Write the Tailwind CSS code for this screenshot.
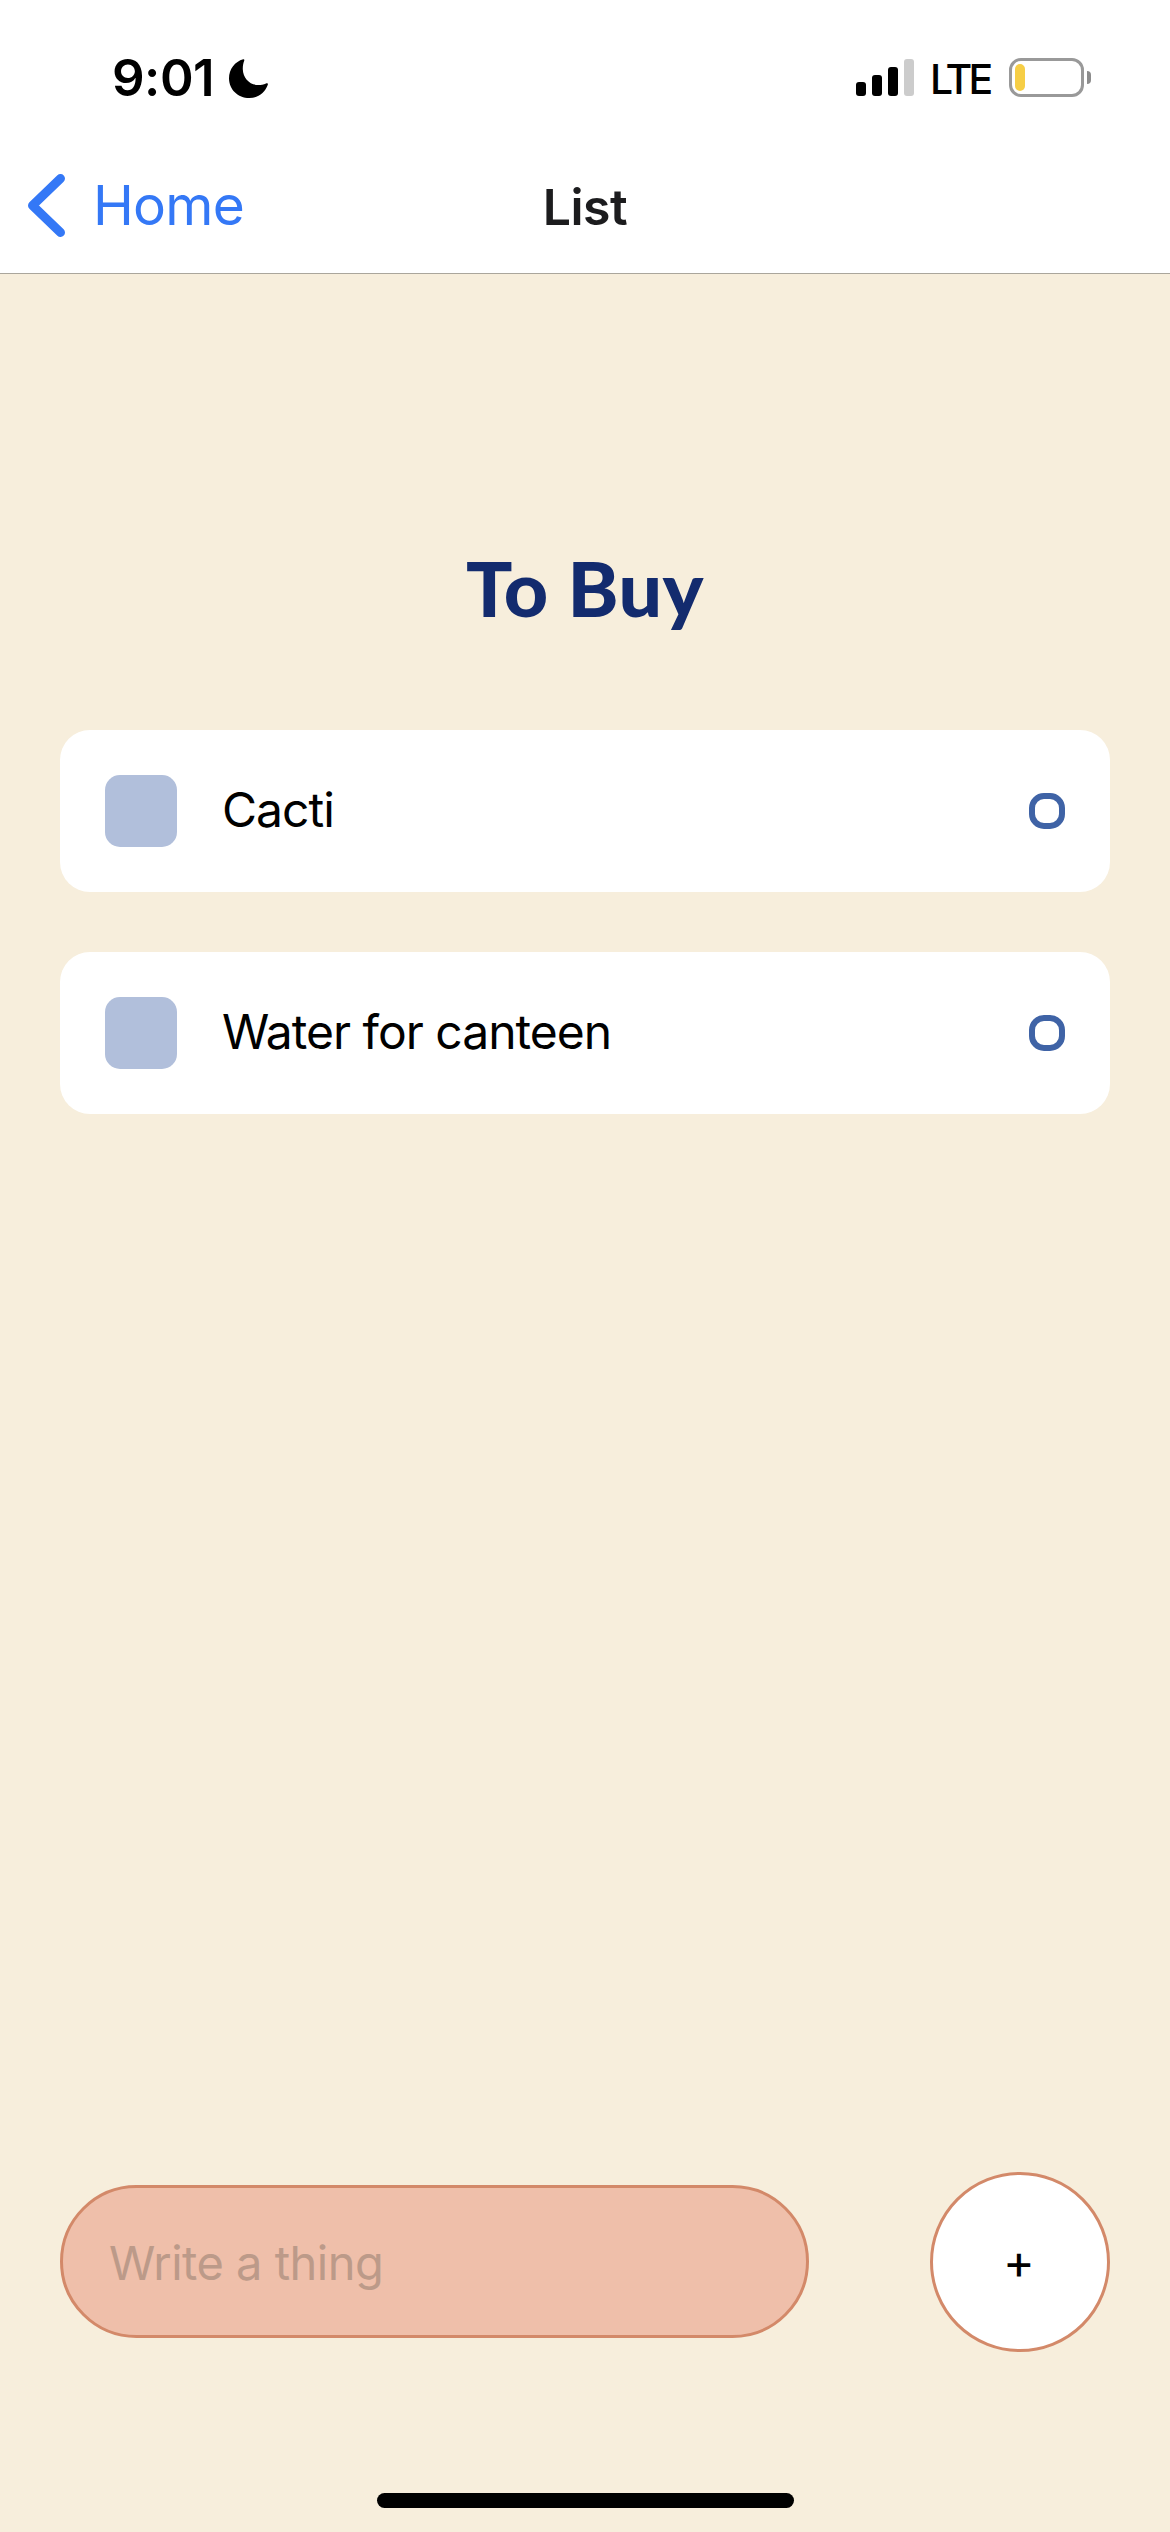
<!DOCTYPE html>
<html lang="en">
<head>
<meta charset="utf-8">
<title>List</title>
<script src="https://cdn.jsdelivr.net/npm/@tailwindcss/browser@4"></script>
</head>
<body class="flex h-[2532px] w-[1170px] flex-col overflow-hidden bg-[#f7eedc] font-[Inter,sans-serif] text-black">
  <header class="flex h-[274px] shrink-0 flex-col border-b border-[#aaa69c] bg-white">
    <div class="flex h-[156px] items-center justify-between pr-[79px] pl-[112px]">
      <div class="flex items-center gap-[18px]">
        <span class="w-[99px] text-[51px] leading-[60px] font-semibold tracking-[-0.5px] whitespace-nowrap">9:01</span>
        <svg class="h-[39px] w-[39px]" viewBox="0 0 39 39"><path d="M14.2 0.2C15.2 0 15.6 0.8 15.2 1.8C14.2 4.4 13.7 7.2 13.8 10.2C14.1 19 20.6 25.9 29 26C32 26 34.6 25.4 37 24.4C38.4 23.9 39.2 24.6 38.8 25.8C36 33.7 29 39 20.4 39C8.800 39 0 30.4 0 19.200C0 10.200 6 2.400 14.200 0.200Z"/></svg>
      </div>
      <div class="flex items-center">
        <div class="-mt-px flex h-[37px] items-end gap-1.5">
          <i class="h-[14px] w-2.5 rounded-[3px] bg-black"></i>
          <i class="h-[21px] w-2.5 rounded-[3px] bg-black"></i>
          <i class="h-[29px] w-2.5 rounded-[3px] bg-black"></i>
          <i class="h-[37px] w-2.5 rounded-[3px] bg-[#ccc]"></i>
        </div>
        <span class="ml-[16px] mt-[2px] w-[62px] text-[41px] leading-[50px] font-medium tracking-[-3.8px]">LTE</span>
        <div class="-mt-px ml-[17px] flex h-[39px] w-[75px] rounded-[12px] border-3 border-[#999] p-[3px]">
          <i class="h-[27px] w-2.5 rounded-[5px] bg-[#f6ce46]"></i>
        </div>
        <i class="-mt-px ml-[3px] h-[13px] w-1 rounded-r-full bg-[#8c8c8c]"></i>
      </div>
    </div>
    <nav class="grid h-[98px] grid-cols-3 items-center">
      <div class="flex items-center pl-7">
        <svg class="h-[63px] w-[37px]" viewBox="0 0 37 63" fill="none" stroke="#3478f6" stroke-width="9" stroke-linecap="round" stroke-linejoin="round"><path d="M32.500 4.500L4.500 31.500L32.500 58.500"/></svg>
        <span class="ml-[28px] text-[55px] leading-[66px] tracking-[-0.8px] text-[#3478f6]">Home</span>
      </div>
      <h1 class="mt-[3px] text-center text-[50px] leading-[60px] font-semibold tracking-[-0.5px] text-[#1c1c1e]">List</h1>
    </nav>
  </header>

  <main class="flex flex-1 flex-col px-[60px] pt-[267px]">
    <h2 class="h-[189px] text-center font-[Lato,sans-serif] text-[77px] leading-[92px] font-black tracking-[0.5px] text-[#132b6e]">To Buy</h2>
    <ul class="flex flex-col gap-[60px]">
      <li class="flex h-[162px] items-center rounded-[30px] bg-white px-[45px]">
        <i class="size-[72px] rounded-[15px] bg-[#b1bfdb]"></i>
        <span class="-mt-0.5 ml-[45px] flex-1 text-[48px] leading-[58px] tracking-[-1px]">Cacti</span>
        <i class="size-9 rounded-[15px] border-6 border-[#3f63a6]"></i>
      </li>
      <li class="flex h-[162px] items-center rounded-[30px] bg-white px-[45px]">
        <i class="size-[72px] rounded-[15px] bg-[#b1bfdb]"></i>
        <span class="-mt-0.5 ml-[45px] flex-1 text-[48px] leading-[58px] tracking-[-1px]">Water for canteen</span>
        <i class="size-9 rounded-[15px] border-6 border-[#3f63a6]"></i>
      </li>
    </ul>
  </main>

  <footer class="flex h-[360px] shrink-0 flex-col items-center px-[60px]">
    <div class="flex h-[180px] w-full items-center justify-between">
      <div class="-mt-px flex h-[153px] w-[749px] items-center rounded-full border-3 border-[#d38969] bg-[#efbfaa] pl-[46px]">
        <span class="mt-[3px] text-[47px] leading-[58px] tracking-[-0.5px] text-[#bc9a89]">Write a thing</span>
      </div>
      <div class="flex size-[180px] items-center justify-center rounded-full border-3 border-[#d38969] bg-white pr-0.5 text-[48px] leading-[50px]">+</div>
    </div>
    <div class="mt-[141px] ml-px h-[15px] w-[417px] rounded-full bg-black"></div>
  </footer>
</body>
</html>
